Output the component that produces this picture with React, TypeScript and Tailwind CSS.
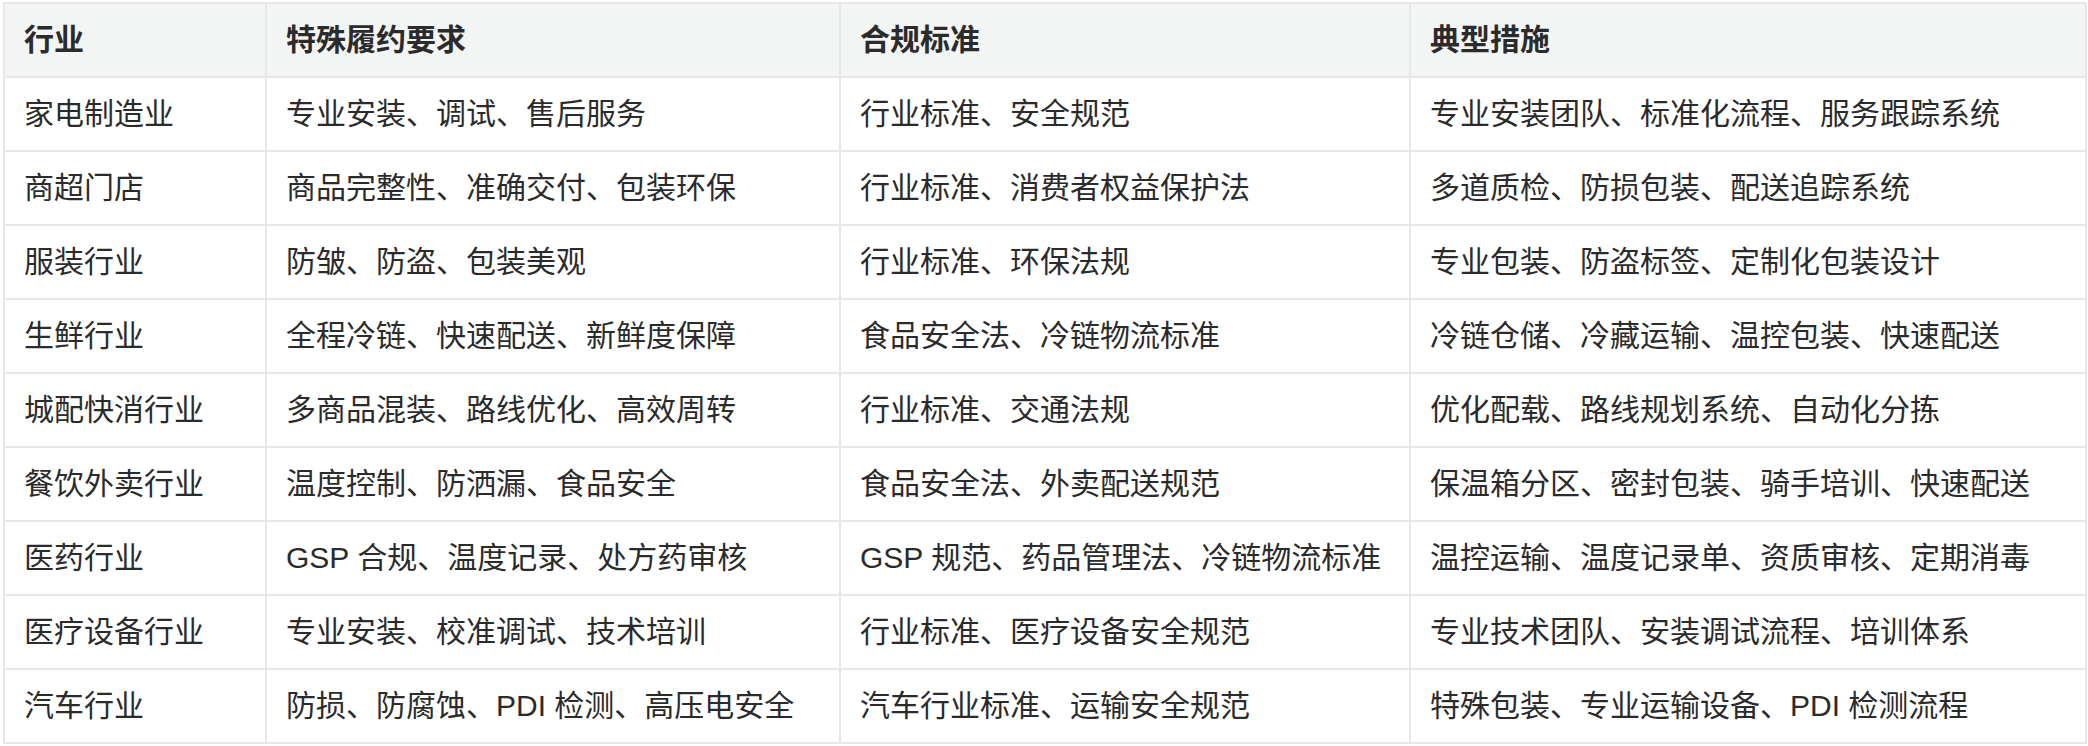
const rows: [string, string, string, string][] = [
  ['家电制造业', '专业安装、调试、售后服务', '行业标准、安全规范', '专业安装团队、标准化流程、服务跟踪系统'],
  ['商超门店', '商品完整性、准确交付、包装环保', '行业标准、消费者权益保护法', '多道质检、防损包装、配送追踪系统'],
  ['服装行业', '防皱、防盗、包装美观', '行业标准、环保法规', '专业包装、防盗标签、定制化包装设计'],
  ['生鲜行业', '全程冷链、快速配送、新鲜度保障', '食品安全法、冷链物流标准', '冷链仓储、冷藏运输、温控包装、快速配送'],
  ['城配快消行业', '多商品混装、路线优化、高效周转', '行业标准、交通法规', '优化配载、路线规划系统、自动化分拣'],
  ['餐饮外卖行业', '温度控制、防洒漏、食品安全', '食品安全法、外卖配送规范', '保温箱分区、密封包装、骑手培训、快速配送'],
  ['医药行业', 'GSP 合规、温度记录、处方药审核', 'GSP 规范、药品管理法、冷链物流标准', '温控运输、温度记录单、资质审核、定期消毒'],
  ['医疗设备行业', '专业安装、校准调试、技术培训', '行业标准、医疗设备安全规范', '专业技术团队、安装调试流程、培训体系'],
  ['汽车行业', '防损、防腐蚀、PDI 检测、高压电安全', '汽车行业标准、运输安全规范', '特殊包装、专业运输设备、PDI 检测流程'],
];

const headers = ['行业', '特殊履约要求', '合规标准', '典型措施'];

export default function App() {
  return (
    <div className="w-[2088px] h-[746px] overflow-hidden bg-white pl-[3px] pt-[2px] font-['Liberation_Sans','Noto_Sans_CJK_SC',sans-serif] text-[30px] text-[#2b2b2b]">
      <table className="table-fixed border-collapse w-[2082px]">
        <colgroup>
          <col className="w-[262px]" />
          <col className="w-[574px]" />
          <col className="w-[570px]" />
          <col className="w-[676px]" />
        </colgroup>
        <thead>
          <tr className="bg-[#f3f4f4]">
            {headers.map((h) => (
              <th
                key={h}
                className="h-[74px] border-2 border-[#e6e8e8] px-[19px] text-left font-bold leading-none"
              >
                {h}
              </th>
            ))}
          </tr>
        </thead>
        <tbody>
          {rows.map((r) => (
            <tr key={r[0]}>
              {r.map((c, i) => (
                <td
                  key={i}
                  className="h-[74px] border-2 border-[#e6e8e8] px-[19px] leading-none whitespace-nowrap"
                >
                  {c}
                </td>
              ))}
            </tr>
          ))}
        </tbody>
      </table>
    </div>
  );
}
